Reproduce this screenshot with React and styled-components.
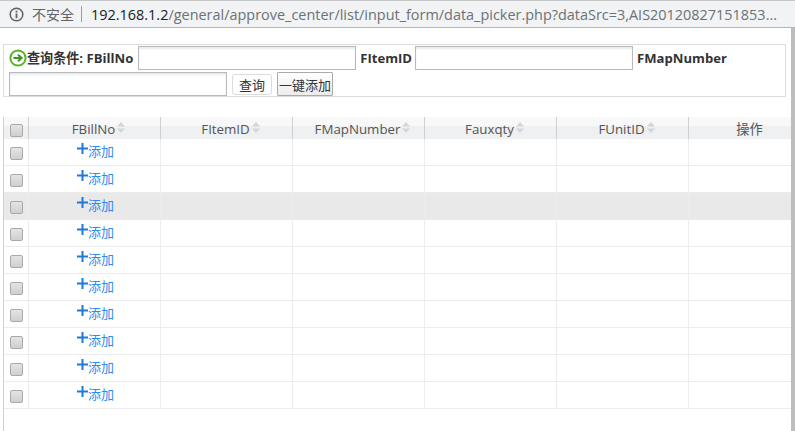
import styled, { createGlobalStyle } from "styled-components";

const columns = ["FBillNo", "FItemID", "FMapNumber", "Fauxqty", "FUnitID"];
const rows = [0, 1, 2, 3, 4, 5, 6, 7, 8, 9];

const GlobalStyle = createGlobalStyle`
    html, body {
        margin: 0;
        height: 100%;
        overflow: hidden;
        background: #ffffff;
        font-family: "Open Sans", "Noto Sans CJK SC", sans-serif;
    }
`;

function InfoIcon() {
    return (
        <svg width="15" height="15" viewBox="0 0 15 15">
            <circle cx="7.5" cy="7.5" r="6.3" fill="none" stroke="#5f6368" strokeWidth="1.5" />
            <rect x="6.6" y="6.5" width="1.8" height="4.7" fill="#5f6368" />
            <rect x="6.6" y="3.7" width="1.8" height="1.8" fill="#5f6368" />
        </svg>
    );
}

function GoIcon() {
    return (
        <svg width="18" height="18" viewBox="0 0 18 18">
            <circle cx="9" cy="9" r="7.6" fill="#ffffff" stroke="#54b51e" strokeWidth="2" />
            <path d="M4.5 9H11M9 5.8L12.6 9L9 12.2" fill="none" stroke="#3f8f2a" strokeWidth="2" />
        </svg>
    );
}

function SortIcon() {
    return (
        <svg width="8" height="11" viewBox="0 0 8 11">
            <path d="M4 0L8 4.5H0Z" fill="#d3d5d8" />
            <path d="M0 6.5H8L4 11Z" fill="#d3d5d8" />
        </svg>
    );
}

function PlusIcon() {
    return (
        <svg width="11" height="11" viewBox="0 0 11 11">
            <path d="M4.5 0H6.5V4.5H11V6.5H6.5V11H4.5V6.5H0V4.5H4.5Z" fill="#1f7ad6" />
        </svg>
    );
}

export default function App() {
    return (
        <Page>
            <GlobalStyle />
            <AddressBar>
                <InfoIcon />
                <Security>不安全</Security>
                <Url>
                    <strong>192.168.1.2</strong>/general/approve_center/list/input_form/data_picker.php?dataSrc=3,AIS20120827151853...
                </Url>
            </AddressBar>
            <Content>
                <Main>
                    <SearchBox>
                        <GoIcon />
                        <Label $first>查询条件: FBillNo</Label>
                        <TextInput />
                        <Label>FItemID</Label>
                        <TextInput />
                        <Label>FMapNumber</Label>
                        <TextInput $wrapped />
                        <QueryButton>查询</QueryButton>
                        <AddAllButton>一键添加</AddAllButton>
                    </SearchBox>
                    <GridPanel>
                        <Grid>
                            <thead>
                                <tr>
                                    <HeadCell $width={24}><CheckBox $top={7} /></HeadCell>
                                    {columns.map(name => (
                                        <HeadCell key={name} $width={132}>
                                            <HeadLabel $sortable>{name}<SortIcon /></HeadLabel>
                                        </HeadCell>
                                    ))}
                                    <HeadCell $width={103} $last>
                                        <HeadLabel>操作</HeadLabel>
                                    </HeadCell>
                                </tr>
                            </thead>
                            <tbody>
                                {rows.map(row => (
                                    <Row key={row} $hover={row === 2}>
                                        <Cell><CheckBox $top={8} /></Cell>
                                        <Cell>
                                            <AddLink><PlusIcon /><span>添加</span></AddLink>
                                        </Cell>
                                        <Cell /><Cell /><Cell /><Cell /><Cell />
                                    </Row>
                                ))}
                            </tbody>
                        </Grid>
                    </GridPanel>
                </Main>
                <ScrollEdge />
            </Content>
        </Page>
    );
}

const Page = styled.div`
    width: 795px;
    height: 431px;
    display: flex;
    flex-direction: column;
    overflow: hidden;
`;
const AddressBar = styled.div`
    height: 28px;
    box-sizing: border-box;
    display: flex;
    align-items: center;
    padding: 0 0 0 9px;
    background: #f1f3f4;
    border-top: 1px solid #c4c6c8;
    border-bottom: 1px solid #b4b6b8;
    flex: none;
`;
const Security = styled.span`
    margin-left: 8px;
    padding-right: 7px;
    border-right: 1px solid #9a9c9e;
    font-family: "Noto Sans CJK SC", sans-serif;
    font-size: 14px;
    line-height: 16px;
    white-space: nowrap;
    color: #5f6368;
`;
const Url = styled.span`
    margin-left: 9px;
    font-size: 14.45px;
    white-space: nowrap;
    color: #6d7175;
    strong {
        font-weight: 400;
        color: #202124;
    }
`;
const Content = styled.div`
    flex: 1;
    display: flex;
    min-height: 0;
`;
const Main = styled.div`
    flex: none;
    width: 791px;
    box-sizing: border-box;
    padding: 16px 0 0 3px;
    display: flex;
    flex-direction: column;
`;
const ScrollEdge = styled.div`
    flex: none;
    width: 4px;
    background: #bdbdbd;
`;
const SearchBox = styled.div`
    width: 783px;
    height: 53px;
    flex: none;
    box-sizing: border-box;
    border: 1px solid #dddddd;
    padding: 1px 5px;
    display: flex;
    flex-wrap: wrap;
    align-items: center;
    align-content: flex-start;
    row-gap: 2px;
`;
const Label = styled.span`
    font-size: 13.1px;
    font-weight: 700;
    color: #333333;
    line-height: 23px;
    margin: ${props => (props.$first ? "0 5px 0 0" : "0 3px 0 4px")};
`;
const TextInput = styled.input`
    width: 218px;
    height: 24px;
    box-sizing: border-box;
    margin-right: ${props => (props.$wrapped ? "5px" : "0")};
    border: 1px solid #b9b9b9;
    background: #ffffff;
    box-shadow: inset 0 2px 2px rgba(70, 120, 140, 0.14);
    outline: none;
`;
const QueryButton = styled.button`
    width: 40px;
    height: 21px;
    box-sizing: border-box;
    margin-right: 5px;
    padding: 0;
    border: 1px solid #dcdcdc;
    border-radius: 3px;
    background: #ffffff;
    font-family: "Noto Sans CJK SC", sans-serif;
    font-size: 13px;
    color: #333333;
`;
const AddAllButton = styled.button`
    width: 56px;
    height: 24px;
    box-sizing: border-box;
    padding: 0;
    border: 1px solid #aaaaaa;
    border-radius: 1px;
    background: linear-gradient(#ffffff, #ececec);
    font-family: "Noto Sans CJK SC", sans-serif;
    font-size: 13px;
    color: #333333;
`;
const GridPanel = styled.div`
    flex: 1;
    margin-top: 20px;
    border-left: 1px solid #d0d0d0;
`;
const Grid = styled.table`
    width: 787px;
    border-collapse: separate;
    border-spacing: 0;
    table-layout: fixed;
`;
const HeadCell = styled.th`
    width: ${props => props.$width}px;
    height: 22px;
    padding: 0 0 0 ${props => (props.$last ? "19px" : "0")};
    box-sizing: border-box;
    border-left: 1px solid #cfcfcf;
    background: linear-gradient(#f8f8f8 0 40%, #eef0f2 40%);
    font-weight: 400;
    text-align: center;
    vertical-align: top;
    line-height: 0;
    &:first-child {
        border-left: none;
    }
`;
const HeadLabel = styled.span`
    display: inline-flex;
    align-items: flex-start;
    height: 22px;
    margin-left: ${props => (props.$sortable ? "8px" : "0")};
    font-size: 13.3px;
    line-height: 24px;
    color: #555555;
    svg {
        margin: 5px 0 0 2px;
    }
`;
const Row = styled.tr`
    background: ${props => (props.$hover ? "#e9e9e9" : "#ffffff")};
`;
const Cell = styled.td`
    height: 27px;
    padding: 0;
    box-sizing: border-box;
    border-left: 1px solid #ececec;
    border-bottom: 1px solid #ececec;
    text-align: center;
    vertical-align: top;
    line-height: 0;
    &:first-child {
        border-left: none;
    }
`;
const CheckBox = styled.span`
    display: inline-block;
    box-sizing: border-box;
    width: 13px;
    height: 13px;
    margin-top: ${props => props.$top}px;
    border: 1px solid #a9a9a9;
    border-radius: 2px;
    background: linear-gradient(#e4e4e4, #cfcfcf);
`;
const AddLink = styled.a`
    display: inline-flex;
    align-items: flex-start;
    height: 26px;
    margin-left: 2px;
    font-family: "Noto Sans CJK SC", sans-serif;
    font-size: 13px;
    line-height: 18px;
    color: #2d8cf0;
    svg {
        margin-top: 4px;
    }
    span {
        margin-top: 3px;
    }
`;
